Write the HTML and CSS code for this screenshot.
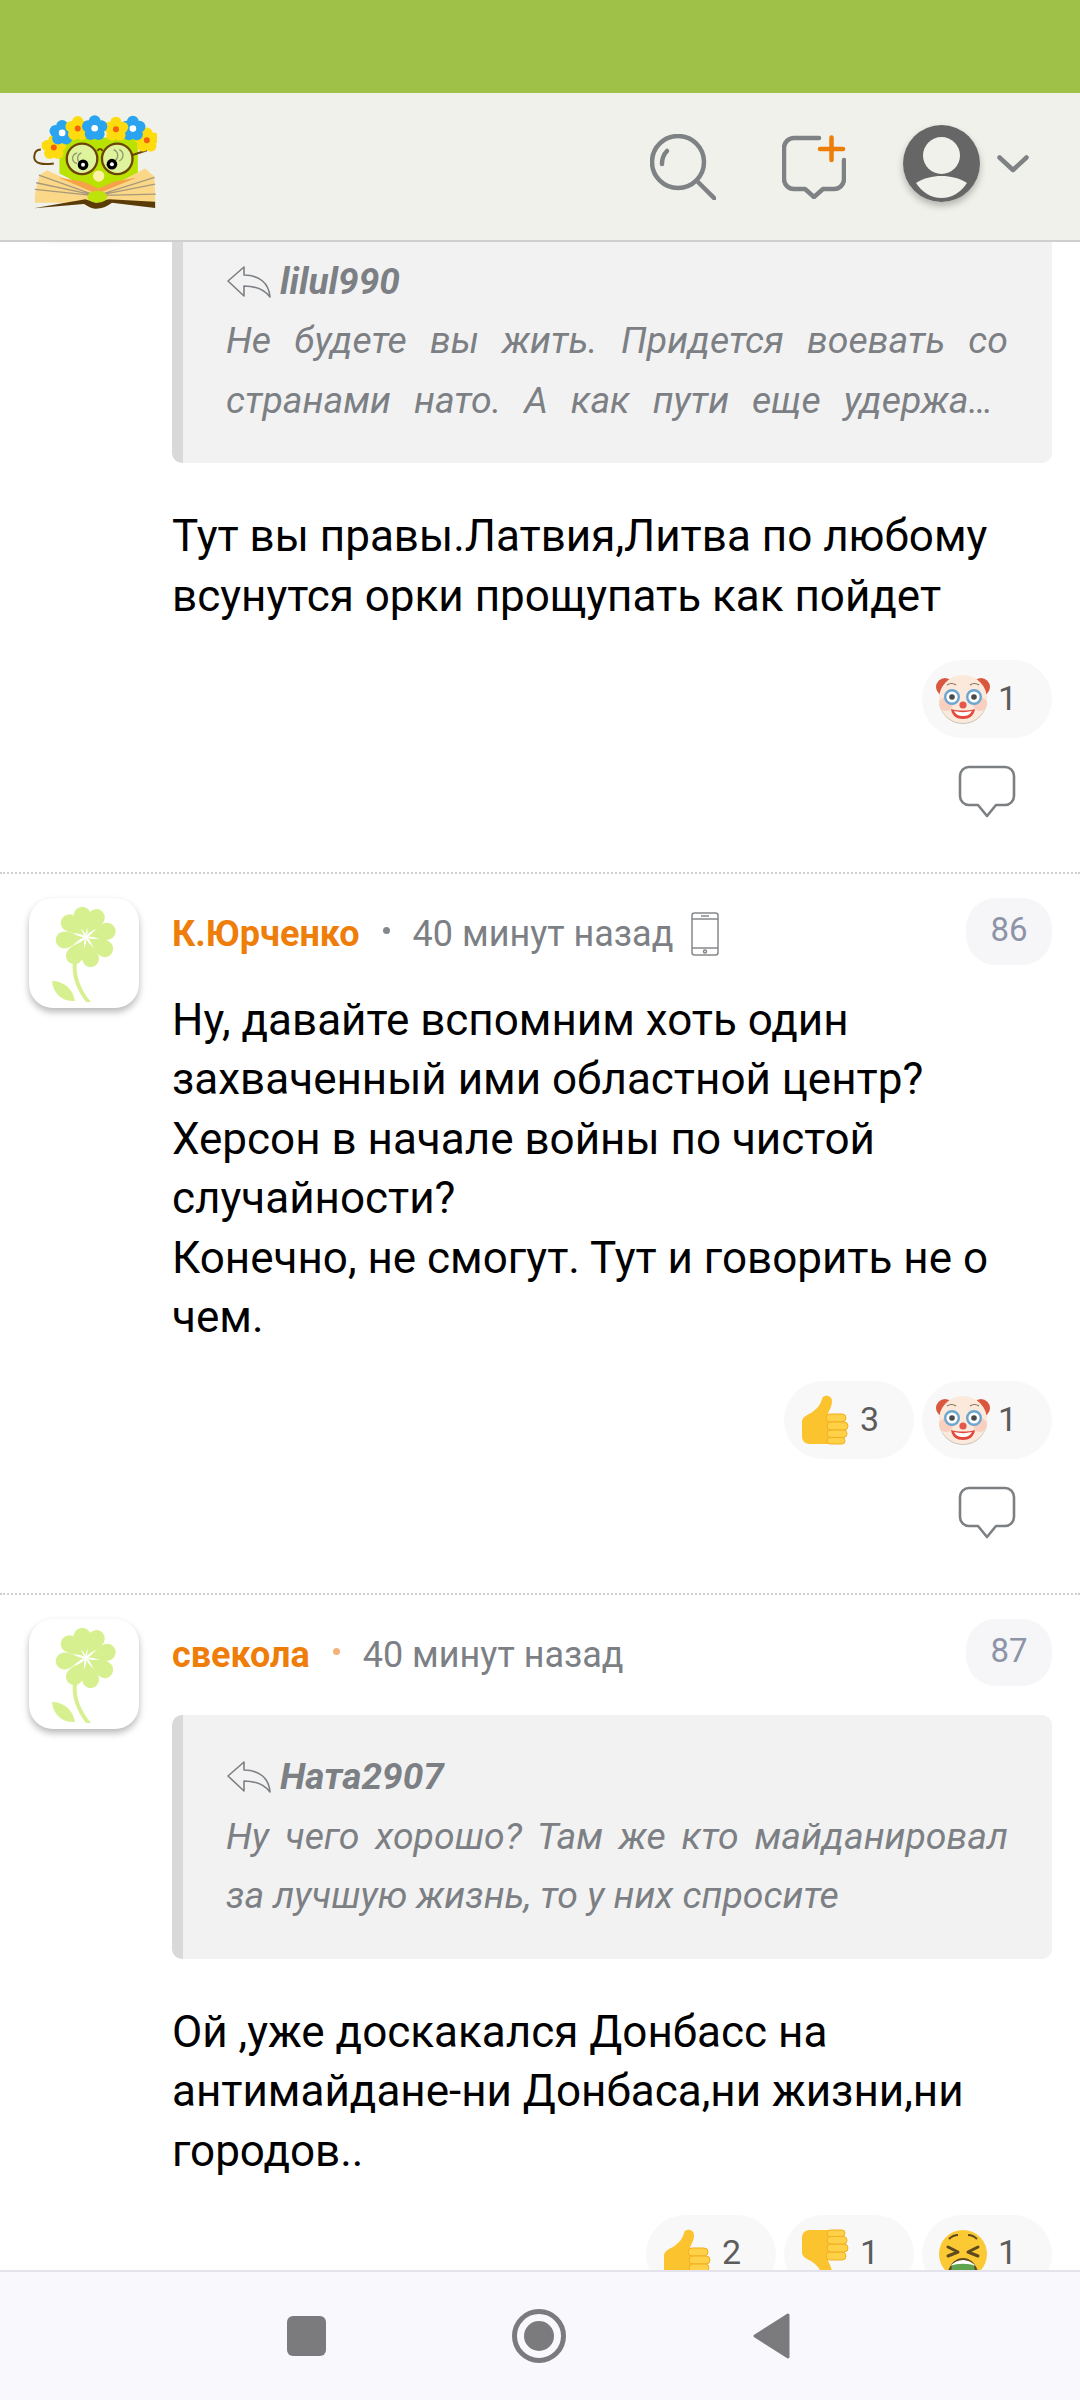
FILE: index.html
```html
<!DOCTYPE html>
<html lang="ru">

<head>
    <meta charset="UTF-8">
    <meta name="viewport" content="width=device-width, initial-scale=1.0">
    <title>Комментарии</title>
    <link rel="stylesheet" href="styles.css">
</head>

<body>
    <!-- Shared icons -->
    <svg class="sprites">
        <symbol id="flower" viewBox="0 0 110 110">
            <g fill="#d7f08f" transform="translate(57 39)">
                <path d="M0 -2C-1 -8 -8.500 -14 -8.500 -22A8.500 8.500 0 0 1 8.500 -22C8.500 -14 1 -8 0 -2Z" transform="rotate(-10)"/>
                <path d="M0 -2C-1 -8 -8.500 -14 -8.500 -22A8.500 8.500 0 0 1 8.500 -22C8.500 -14 1 -8 0 -2Z" transform="rotate(28)"/>
                <path d="M0 -2C-1 -8 -8.500 -14 -8.500 -22A8.500 8.500 0 0 1 8.500 -22C8.500 -14 1 -8 0 -2Z" transform="rotate(75)"/>
                <path d="M0 -2C-1 -8 -8.500 -14 -8.500 -22A8.500 8.500 0 0 1 8.500 -22C8.500 -14 1 -8 0 -2Z" transform="rotate(122)"/>
                <path d="M0 -2C-1 -8 -8.500 -14 -8.500 -22A8.500 8.500 0 0 1 8.500 -22C8.500 -14 1 -8 0 -2Z" transform="rotate(168)"/>
                <path d="M0 -2C-1 -8 -8.500 -14 -8.500 -22A8.500 8.500 0 0 1 8.500 -22C8.500 -14 1 -8 0 -2Z" transform="rotate(212)"/>
                <path d="M0 -2C-1 -8 -8.500 -14 -8.500 -22A8.500 8.500 0 0 1 8.500 -22C8.500 -14 1 -8 0 -2Z" transform="rotate(262)"/>
                <path d="M0 -2C-1 -8 -8.500 -14 -8.500 -22A8.500 8.500 0 0 1 8.500 -22C8.500 -14 1 -8 0 -2Z" transform="rotate(310)"/>
            </g>
            <path d="M44 64C42 78 48 92 57 104H62C52 92 46 78 48 64Z" fill="#d7f08f"/>
            <path d="M23 83C35 83 44 91 46 103C34 104 24 96 23 83Z" fill="#d7f08f"/>
        </symbol>

        <symbol id="reply" viewBox="0 0 46 34">
            <path d="M2 16L18 2V10C33 10 43 18 44 32C38 24 30 21 18 21V31Z" fill="none" stroke="#7c8084" stroke-width="1.600" stroke-linejoin="round"/>
        </symbol>

        <symbol id="bubble" viewBox="0 0 58 54">
            <path d="M11 2H47A9 9 0 0 1 56 11V31A9 9 0 0 1 47 40H38L29 51L20 40H11A9 9 0 0 1 2 31V11A9 9 0 0 1 11 2Z" fill="none" stroke="#7d8083" stroke-width="2.600" stroke-linejoin="round"/>
        </symbol>

        <symbol id="phone" viewBox="0 0 28 44">
            <g fill="none" stroke="#85888b" stroke-width="1.500">
                <rect x="1" y="1" width="26" height="42" rx="2.500"/>
                <path d="M1 7H27M1 36H27M10 4H18"/>
                <circle cx="14" cy="39.500" r="1.500"/>
            </g>
        </symbol>

        <symbol id="thumb" viewBox="0 0 48 50">
            <path d="M1 27C1 22 6 20 10 18C16 14 20 9 21 4C22 -1 31 0 31 6C31 12 28 15 27 19L28 49H9C3 49 1 45 1 41Z" fill="#fbc32d"/>
            <g fill="#ffd149" stroke="#f2ae1c" stroke-width="1">
                <rect x="25" y="19" width="20" height="8" rx="4"/>
                <rect x="26" y="27" width="21" height="8" rx="4"/>
                <rect x="26" y="35" width="20" height="7.500" rx="3.700"/>
                <rect x="26" y="42.500" width="18" height="6.500" rx="3.200"/>
            </g>
        </symbol>

        <symbol id="clown" viewBox="0 0 54 50">
            <circle cx="9" cy="13" r="9" fill="#d9573f"/>
            <circle cx="45" cy="13" r="9" fill="#d9573f"/>
            <circle cx="27" cy="26" r="24" fill="#c9c3b8"/>
            <circle cx="27" cy="25" r="24" fill="#fbeadb"/>
            <circle cx="10" cy="30" r="7" fill="#f9cfc0"/>
            <circle cx="44" cy="30" r="7" fill="#f9cfc0"/>
            <g fill="#fff" stroke="#6aa6d0" stroke-width="2.400">
                <circle cx="16" cy="23" r="6.800"/>
                <circle cx="38" cy="23" r="6.800"/>
            </g>
            <circle cx="16" cy="23" r="2.800" fill="#4a4a4a"/>
            <circle cx="38" cy="23" r="2.800" fill="#4a4a4a"/>
            <path d="M11 11C14 9 17 9 20 11M34 11C37 9 40 9 43 11" fill="none" stroke="#8a6a50" stroke-width="1.200"/>
            <path d="M15 35C22 37 32 37 39 35C38 42 33 45 27 45C21 45 16 42 15 35Z" fill="#e2483d"/>
            <path d="M18 37C24 38.500 30 38.500 36 37C34 41 31 42 27 42C23 42 20 41 18 37Z" fill="#fff"/>
            <circle cx="27" cy="31" r="3.600" fill="#e2584a"/>
        </symbol>

        <symbol id="sick" viewBox="0 0 50 50">
            <circle cx="25" cy="25" r="24" fill="#fbc933"/>
            <path d="M10 18L20 23L10 27M40 18L30 23L40 27" fill="none" stroke="#5f4a20" stroke-width="3" stroke-linecap="round" stroke-linejoin="round"/>
            <path d="M11 10C14 7 17 6 20 6M39 10C36 7 33 6 30 6" fill="none" stroke="#5f4a20" stroke-width="2"/>
            <path d="M9 50C9 38 16 29 25 29C34 29 41 38 41 50Z" fill="#5f4a20"/>
            <path d="M14 36C21 32 29 32 36 36L38 50H12Z" fill="#5fa550"/>
            <path d="M12 37C20 29 30 29 38 37C30 34 20 34 12 37Z" fill="#fff"/>
        </symbol>
    </svg>

    <div class="status-bar"></div>

    <header class="top-bar">
        <!-- Site logo -->
        <svg class="logo" viewBox="100 155 375 295">
            <defs>
                <g id="blue-flower">
                    <circle cx="0" cy="-21" r="18" fill="#2aa4f0"/>
                    <circle cx="20" cy="-6" r="18" fill="#2aa4f0"/>
                    <circle cx="12" cy="17" r="18" fill="#2aa4f0"/>
                    <circle cx="-12" cy="17" r="18" fill="#2aa4f0"/>
                    <circle cx="-20" cy="-6" r="18" fill="#2aa4f0"/>
                    <circle r="10" fill="#fff"/>
                </g>
                <g id="yellow-flower">
                    <circle cx="0" cy="-21" r="17" fill="#fedb0e"/>
                    <circle cx="20" cy="-6" r="17" fill="#fedb0e"/>
                    <circle cx="12" cy="17" r="17" fill="#fedb0e"/>
                    <circle cx="-12" cy="17" r="17" fill="#fedb0e"/>
                    <circle cx="-20" cy="-6" r="17" fill="#fedb0e"/>
                    <circle r="9" fill="#f4600c"/>
                </g>
            </defs>
            <path d="M182 232H418V340L300 400L182 340Z" fill="#b9e200"/>
            <path d="M108 405L122 345L145 330L295 400V428L108 428Z" fill="#fbd888"/>
            <path d="M470 405L468 350L440 325L295 400V428L470 428Z" fill="#fbd888"/>
            <path d="M180 352L295 402L415 352L345 365L300 385L255 365Z" fill="#f6a249"/>
            <path d="M120 345L280 402M112 368L280 404M108 388L280 406M468 352L310 402M470 372L310 404M472 402L310 406" stroke="#a8997a" stroke-width="4" fill="none"/>
            <path d="M105 445L260 418L292 428L330 418L470 425V444L340 428C325 440 305 447 290 446C275 446 265 435 255 432Z" fill="#5a3a06"/>
            <ellipse cx="296" cy="410" rx="30" ry="18" fill="#bde30a"/>
            <circle cx="300" cy="348" r="17" fill="#fdf1a8"/>
            <path d="M165 310C130 315 105 310 106 290C107 275 115 268 126 268" fill="none" stroke="#6b4508" stroke-width="6"/>
            <path d="M400 285L445 270" fill="none" stroke="#6b4508" stroke-width="6"/>
            <circle cx="250" cy="296" r="46" fill="#dff29c" stroke="#6b4508" stroke-width="7"/>
            <circle cx="356" cy="296" r="46" fill="#dff29c" stroke="#6b4508" stroke-width="7"/>
            <path d="M296 272C302 264 306 264 312 272" fill="none" stroke="#6b4508" stroke-width="6"/>
            <path d="M235 278C216 285 218 305 235 310M248 278C232 285 234 305 248 310M345 268C362 275 360 295 348 302M362 268C378 275 376 295 362 302" fill="none" stroke="#8f9a70" stroke-width="4"/>
            <circle cx="253" cy="314" r="16" fill="#000"/>
            <circle cx="253" cy="314" r="6" fill="#fff"/>
            <circle cx="340" cy="312" r="16" fill="#000"/>
            <circle cx="340" cy="312" r="6" fill="#fff"/>
            <use href="#yellow-flower" x="165" y="262"/>
            <use href="#yellow-flower" x="445" y="240"/>
            <use href="#blue-flower" x="190" y="218"/>
            <use href="#yellow-flower" x="237" y="205"/>
            <use href="#blue-flower" x="403" y="205"/>
            <use href="#yellow-flower" x="352" y="207"/>
            <use href="#blue-flower" x="288" y="204"/>
        </svg>

        <svg class="icon-search" viewBox="0 0 66 66">
            <g fill="none" stroke="#7e8285" stroke-width="4.500" stroke-linecap="round">
                <circle cx="28" cy="28" r="26"/>
                <path d="M47 47L65 65"/>
                <path d="M12 30C12 25 14 20 17 17"/>
            </g>
        </svg>

        <svg class="icon-compose" viewBox="0 0 64 64">
            <path d="M37 3H12A10 10 0 0 0 2 13V44A10 10 0 0 0 12 54H23L32 62L41 54H52A10 10 0 0 0 62 44V25" fill="none" stroke="#7e8285" stroke-width="4.500" stroke-linecap="round" stroke-linejoin="round"/>
            <path d="M38 14H61M49.500 2.500V25" fill="none" stroke="#ee7d0a" stroke-width="4.500" stroke-linecap="round"/>
        </svg>

        <div class="user-pic">
            <svg viewBox="0 0 77 77">
                <circle cx="38.500" cy="38.500" r="38.500" fill="#666"/>
                <circle cx="38.500" cy="30.500" r="18.500" fill="#f0f1ea"/>
                <path d="M13 58C21 53 29 51 38.500 51C48 51 56 53 64 58C58 67 49 73 38.500 73C28 73 19 67 13 58Z" fill="#f0f1ea"/>
            </svg>
        </div>

        <svg class="icon-chevron" viewBox="0 0 32 18">
            <path d="M2.500 2.500L16 15L29.500 2.500" fill="none" stroke="#7e8285" stroke-width="4.500" stroke-linecap="round" stroke-linejoin="round"/>
        </svg>
    </header>

    <main class="feed">
        <div class="comment-list">

            <article class="comment">
                <div class="avatar"><svg><use href="#flower"/></svg></div>
                <div class="comment-body">
                    <div class="comment-head"></div>
                    <blockquote class="quote">
                        <div class="quote-author"><svg class="reply-icon"><use href="#reply"/></svg>lilul990</div>
                        <div class="quote-line">Не будете вы жить. Придется воевать со</div>
                        <div class="quote-line quote-cut">странами нато. А как пути еще удержа…</div>
                    </blockquote>
                    <p class="comment-text">Тут вы правы.Латвия,Литва по любому всунутся орки прощупать как пойдет</p>
                    <div class="reactions">
                        <div class="reaction"><svg class="emoji"><use href="#clown"/></svg><span>1</span></div>
                    </div>
                    <div class="comment-actions"><svg class="bubble-icon"><use href="#bubble"/></svg></div>
                </div>
            </article>

            <article class="comment">
                <div class="avatar"><svg><use href="#flower"/></svg></div>
                <div class="comment-body">
                    <div class="comment-head">
                        <div class="meta">
                            <span class="name">К.Юрченко</span>
                            <span class="dot"></span>
                            <span class="time">40 минут назад</span>
                            <svg class="phone-icon"><use href="#phone"/></svg>
                        </div>
                        <div class="number">86</div>
                    </div>
                    <p class="comment-text">Ну, давайте вспомним хоть один захваченный ими областной центр?<br>Херсон в начале войны по чистой случайности?<br>Конечно, не смогут. Тут и говорить не о чем.</p>
                    <div class="reactions">
                        <div class="reaction"><svg class="emoji"><use href="#thumb"/></svg><span>3</span></div>
                        <div class="reaction"><svg class="emoji"><use href="#clown"/></svg><span>1</span></div>
                    </div>
                    <div class="comment-actions"><svg class="bubble-icon"><use href="#bubble"/></svg></div>
                </div>
            </article>

            <article class="comment">
                <div class="avatar"><svg><use href="#flower"/></svg></div>
                <div class="comment-body">
                    <div class="comment-head">
                        <div class="meta">
                            <span class="name">свекола</span>
                            <span class="dot dot-new"></span>
                            <span class="time">40 минут назад</span>
                        </div>
                        <div class="number">87</div>
                    </div>
                    <blockquote class="quote">
                        <div class="quote-author"><svg class="reply-icon"><use href="#reply"/></svg>Ната2907</div>
                        <div class="quote-line">Ну чего хорошо? Там же кто майданировал</div>
                        <div class="quote-line quote-end">за лучшую жизнь, то у них спросите</div>
                    </blockquote>
                    <p class="comment-text">Ой ,уже доскакался Донбасс на антимайдане-ни Донбаса,ни жизни,ни городов..</p>
                    <div class="reactions">
                        <div class="reaction"><svg class="emoji"><use href="#thumb"/></svg><span>2</span></div>
                        <div class="reaction"><svg class="emoji emoji-flip"><use href="#thumb"/></svg><span>1</span></div>
                        <div class="reaction"><svg class="emoji"><use href="#sick"/></svg><span>1</span></div>
                    </div>
                </div>
            </article>

        </div>
    </main>

    <!-- Android buttons -->
    <nav class="nav-bar">
        <div class="nav-cell"><div class="nav-square"></div></div>
        <div class="nav-cell"><div class="nav-circle"><div class="nav-circle-inner"></div></div></div>
        <div class="nav-cell">
            <svg class="nav-back" viewBox="0 0 38 46">
                <path d="M35 2L2 23L35 44Z" fill="#7b7b7d" stroke="#7b7b7d" stroke-width="3" stroke-linejoin="round"/>
            </svg>
        </div>
    </nav>
</body>

</html>
```

FILE: styles.css
```css
body {
    margin: 0;
    width: 1080px;
    height: 2400px;
    display: flex;
    flex-direction: column;
    overflow: hidden;
    background-color: #fff;
    font-family: Roboto, "Noto Sans", sans-serif;
}

.sprites {
    display: none;
}

.status-bar {
    height: 93px;
    flex-shrink: 0;
    background-color: #9fc147;
}

.top-bar {
    height: 149px;
    flex-shrink: 0;
    display: flex;
    align-items: center;
    padding: 0 51px 6px 32px;
    box-sizing: border-box;
    background-color: #f0f1ea;
    border-bottom: 2px solid #cfcfcf;
}

.logo {
    width: 125px;
    height: 98px;
    margin-right: auto;
    margin-bottom: 5px;
}

.icon-search {
    width: 66px;
    height: 66px;
    margin-top: 6px;
}

.icon-compose {
    width: 64px;
    height: 64px;
    margin-left: 66px;
    margin-top: 6px;
}

.user-pic {
    width: 77px;
    height: 77px;
    margin-left: 57px;
    border-radius: 50%;
    box-shadow: 0 4px 7px rgba(0, 0, 0, 0.25);
}

.user-pic svg {
    display: block;
    width: 77px;
    height: 77px;
}

.icon-chevron {
    width: 32px;
    height: 18px;
    margin-left: 17px;
}

.feed {
    flex: 1;
    min-height: 0;
    overflow: hidden;
}

.comment-list {
    margin-top: -144px;
}

.comment {
    display: flex;
    padding: 24px 28px 53px 29px;
    border-top: 2px dotted #cfcfcf;
}

.avatar {
    width: 110px;
    height: 110px;
    flex-shrink: 0;
    border-radius: 24px;
    background-color: #fff;
    box-shadow: 0 4px 7px rgba(0, 0, 0, 0.28);
}

.avatar svg {
    display: block;
    width: 110px;
    height: 110px;
}

.comment-body {
    width: 880px;
    margin-left: 33px;
}

.comment-head {
    display: flex;
    align-items: flex-start;
    justify-content: space-between;
    height: 93px;
}

.meta {
    display: flex;
    align-items: center;
    height: 72px;
}

.name {
    font-size: 36px;
    font-weight: 700;
    color: #ee7d0a;
}

.dot {
    width: 7px;
    height: 7px;
    margin: -8px 23px 0 23px;
    border-radius: 50%;
    background-color: #85888b;
}

.dot-new {
    background-color: #f4b27a;
}

.time {
    font-size: 36px;
    color: #7c8084;
}

.phone-icon {
    width: 28px;
    height: 44px;
    margin-left: 18px;
}

.number {
    width: 86px;
    height: 67px;
    line-height: 64px;
    text-align: center;
    font-size: 33px;
    color: #8d94a8;
    background-color: #f6f6f8;
    border-radius: 30px;
}

.quote {
    margin: 3px 0 44px;
    padding: 32px 44px 33px 43px;
    background-color: #f2f2f2;
    border-left: 11px solid #d9d9d9;
    border-radius: 10px;
    font-size: 37.4px;
    font-style: italic;
    line-height: 59.4px;
    color: #7c8084;
}

.quote-author {
    display: flex;
    align-items: center;
    font-size: 37px;
    font-weight: 700;
}

.reply-icon {
    width: 46px;
    height: 34px;
    margin-right: 8px;
}

.quote-line {
    text-align: justify;
    text-align-last: justify;
    white-space: nowrap;
}

.quote-cut {
    margin-right: 15px;
}

.quote-end {
    text-align-last: left;
}

.comment-text {
    margin: 0;
    font-size: 44px;
    line-height: 59.4px;
    color: #000;
}

.reactions {
    display: flex;
    justify-content: flex-end;
    gap: 8px;
    margin-top: 34px;
}

.reaction {
    width: 130px;
    height: 78px;
    box-sizing: border-box;
    display: flex;
    align-items: center;
    padding-left: 14px;
    border-radius: 39px;
    background-color: #f8f8f8;
    font-size: 34px;
    line-height: 1;
    color: #5c5c5c;
}

.reaction span {
    margin-bottom: 3px;
}

.emoji {
    width: 54px;
    height: 50px;
    margin-right: 8px;
}

.emoji-flip {
    transform: scaleY(-1);
}

.comment-actions {
    display: flex;
    justify-content: flex-end;
    margin-top: 27px;
    padding-right: 36px;
}

.bubble-icon {
    display: block;
    width: 58px;
    height: 54px;
}

.nav-bar {
    height: 130px;
    flex-shrink: 0;
    box-sizing: border-box;
    display: grid;
    grid-template-columns: repeat(3, 233px);
    justify-content: center;
    align-items: center;
    padding-right: 2px;
    background-color: #f8f8fd;
    border-top: 2px solid #e4e3ec;
}

.nav-cell {
    display: flex;
    justify-content: center;
}

.nav-square {
    width: 39px;
    height: 40px;
    border-radius: 6px;
    background-color: #7b7b7d;
}

.nav-circle {
    width: 54px;
    height: 54px;
    box-sizing: border-box;
    display: flex;
    align-items: center;
    justify-content: center;
    border: 5px solid #7b7b7d;
    border-radius: 50%;
}

.nav-circle-inner {
    width: 30px;
    height: 30px;
    border-radius: 50%;
    background-color: #7b7b7d;
}

.nav-back {
    width: 38px;
    height: 46px;
}
```
